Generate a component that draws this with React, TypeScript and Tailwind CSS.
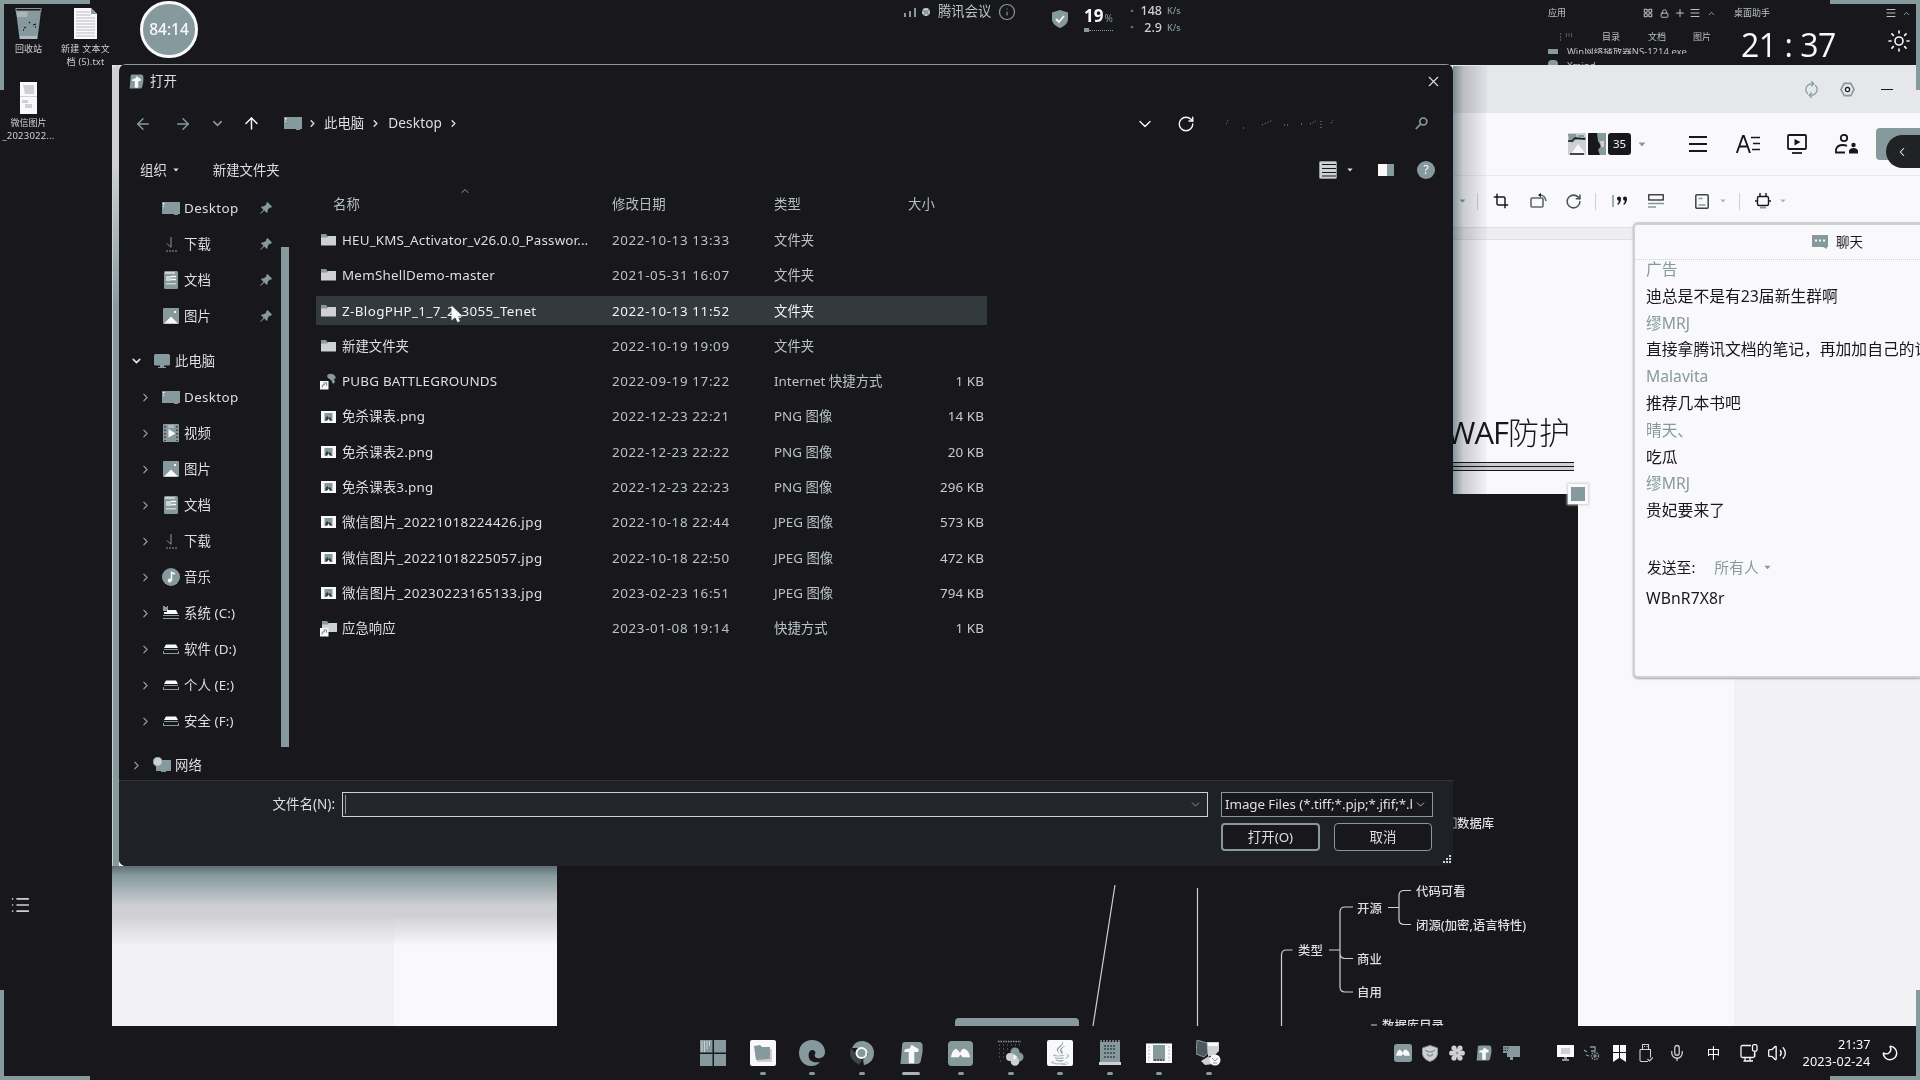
import React from "react";
import {
  ArrowLeft, ArrowRight, ArrowUp, ChevronDown, ChevronLeft, ChevronRight, ChevronUp, Crop, Info, Lock, Menu, Mic, Moon,
  Plus, RotateCw, Volume2, X, LayoutGrid, Sun, List, RefreshCw,
} from "lucide-react";
import { FaJava } from "react-icons/fa";

const TEAL = "#869a9e";
const GRAY = "#cfd0d4";
const WHITE = "#f9f9fc";
const INK = "#18171c";

type IconProps = { className?: string };

/* ---------- small shared drawings ---------- */

const Caret = ({ className = "" }: IconProps) => (
  <svg viewBox="0 0 8 5" className={`shrink-0 ${className}`}><path d="M0.5 0.5h7L4 4.6z" fill="currentColor" /></svg>
);

const Folder = () => (
  <svg viewBox="0 0 17 14" className="h-[14px] w-[17px]">
    <path d="M1 1h5l1.5 2H16v3H1z" fill={TEAL} />
    <path d="M1 4.5h6L8.500 3H16v9.500H1z" fill={GRAY} />
  </svg>
);

const LinkBadge = () => (
  <>
    <rect x="0" y="8" width="8.500" height="8.500" fill={WHITE} />
    <path d="M2 14.500c0-2 1-3.200 3-3.200M3.500 9.800h3v3" stroke={TEAL} strokeWidth="1.200" fill="none" />
  </>
);

const FolderLink = () => (
  <svg viewBox="0 0 17 17" className="h-[17px] w-[17px]">
    <path d="M2 1h5l1.500 2H17v3H2z" fill={TEAL} />
    <path d="M2 4.500h6L9 3h8v9H2z" fill={GRAY} />
    <LinkBadge />
  </svg>
);

const Pubg = () => (
  <svg viewBox="0 0 17 17" className="h-[17px] w-[17px]">
    <path d="M7 3c1-3 6-3 8 0l1 2-2 1 1 3-2 2-2-4-3-2z" fill={TEAL} />
    <LinkBadge />
  </svg>
);

const ImageFile = () => (
  <svg viewBox="0 0 15 12" className="h-[12px] w-[15px]">
    <rect width="15" height="12" fill={WHITE} />
    <rect x="3.500" y="2" width="8" height="8" fill={TEAL} />
    <path d="M4.500 9.500V7l2-2 1 2 1.500-1 2 3.500z" fill={INK} opacity=".75" />
    <path d="M6 10l1.500-2.500L9 10z" fill={WHITE} />
  </svg>
);

const DesktopIcon = () => (
  <svg viewBox="0 0 18 13" className="h-[13px] w-[18px]">
    <path d="M0 0h18v12h-2v1h-4v-1H0z" fill={TEAL} />
    <path d="M1 1h1.500v1.500H1zM1 4h1v1H1z" fill={WHITE} />
  </svg>
);

const DownloadIcon = () => (
  <svg viewBox="0 0 16 16" className="h-[16px] w-[16px]">
    <path d="M8 1v10M4 7.500l4 4" stroke={TEAL} strokeWidth="1" fill="none" />
    <path d="M3 15h11" stroke={TEAL} strokeWidth="1" strokeDasharray="2 1" />
  </svg>
);

const DocIcon = () => (
  <svg viewBox="0 0 14 18" className="h-[18px] w-[14px]">
    <rect width="14" height="18" rx="1.500" fill={TEAL} />
    <path d="M1 1h10v2H1zM2 5h5v5H2zM2 12h10v1.500H2z" fill={GRAY} />
    <path d="M7 5.500h5M7 8.500h5" stroke={WHITE} strokeWidth="1.600" />
  </svg>
);

const PictureIcon = () => (
  <svg viewBox="0 0 16 16" className="h-[16px] w-[16px]">
    <rect width="16" height="16" rx="1" fill={TEAL} />
    <path d="M1 15.500L8 8.500l7 7z" fill={WHITE} />
    <rect x="11" y="3" width="2" height="2" fill={WHITE} />
  </svg>
);

const VideoIcon = () => (
  <svg viewBox="0 0 16 18" className="h-[18px] w-[16px]">
    <rect width="16" height="18" rx="1" fill={TEAL} />
    <path d="M2 2v15M14 2v15" stroke={INK} strokeWidth="1.200" strokeDasharray="1.500 2" />
    <path d="M5 1h6v3H5z" fill={GRAY} opacity=".6" />
    <path d="M5.500 5l7 4.500-7 4z" fill={WHITE} />
  </svg>
);

const MusicIcon = () => (
  <svg viewBox="0 0 18 18" className="h-[18px] w-[18px]">
    <circle cx="9" cy="9" r="9" fill={TEAL} />
    <path d="M9.500 12.500V4.500l3.500 1.500" stroke={WHITE} strokeWidth="1.500" fill="none" />
    <circle cx="7.700" cy="12.500" r="2" fill={WHITE} />
  </svg>
);

const DriveIcon = () => (
  <svg viewBox="0 0 16 11" className="h-[11px] w-[16px]">
    <path d="M3 0.500h10l2 3.500H1z" fill={WHITE} />
    <path d="M1 5.500h14M0 9.500h16" stroke={TEAL} strokeWidth="1" />
    <path d="M0.500 7v2M15.500 7v2" stroke={TEAL} strokeWidth="1" />
  </svg>
);

const SystemDriveIcon = () => (
  <svg viewBox="0 0 16 14" className="h-[14px] w-[16px]">
    <path d="M0 0h2v1h2V0h1v5H0z" fill={TEAL} />
    <path d="M4 4h9l2 4H1V6h3z" fill={WHITE} />
    <path d="M0 9.500h16M0 12.500h16" stroke={TEAL} strokeWidth="1" />
  </svg>
);

const ComputerIcon = () => (
  <svg viewBox="0 0 16 15" className="h-[15px] w-[16px]">
    <rect width="16" height="11.500" rx="1.500" fill={TEAL} />
    <path d="M6 11h4v2H6zM4 13h8v1H4z" fill={TEAL} />
  </svg>
);

const NetworkIcon = () => (
  <svg viewBox="0 0 18 16" className="h-[16px] w-[18px]">
    <rect x="3" y="3" width="15" height="11" fill={TEAL} />
    <circle cx="4.700" cy="4.700" r="4.500" fill={GRAY} stroke={TEAL} />
    <path d="M8 14h5v1H8z" fill={TEAL} />
  </svg>
);

const Pin = () => (
  <svg viewBox="0 0 12 12" className="h-[12px] w-[12px]">
    <path d="M7.500 0L12 4.500 10.500 6 9.800 5.600 7.700 8l-.2 2.500-1 .3L4.300 8.500.5 12l-.4-.4L3.500 7.700 1.200 5.500l.4-1L4 4.300l2.400-2.100L6.100 1.400z" fill={TEAL} />
  </svg>
);

const CrossLogo = ({ className = "" }: IconProps) => (
  <svg viewBox="0 0 26 26" className={className}>
    <path d="M3 3q0-2 3-2h15q4 0 4 4v7l-2 10q-.5 3-3 3H1l1-10z" fill={TEAL} />
    <path d="M13 4l8 5-1 3h-4v12h-6V12H5l1-3 5-1z" fill={WHITE} />
  </svg>
);

const MeetingLogo = ({ className = "" }: IconProps) => (
  <svg viewBox="0 0 26 26" className={className}>
    <rect width="26" height="26" rx="4" fill={TEAL} />
    <path d="M3 17q1-7 5-9 3 1 4.500 4.500Q14 8 17 8q5 2 6 9h-8l-2-3-2 3z" fill={WHITE} />
  </svg>
);

/* ---------- desktop ---------- */

function Desktop() {
  return (
    <>
      <div className="absolute left-0 top-0 flex w-[114px] flex-col text-[9px] leading-[13px] text-[#cfd0d4]">
        <div className="flex pt-2">
          <div className="flex w-[57px] flex-col items-center">
            <svg viewBox="0 0 27 31" className="h-[31px] w-[27px]">
              <path d="M1 3h25l-3.500 28h-18z" fill={TEAL} />
              <path d="M1 3h12l-1 6H2z" fill={GRAY} opacity=".5" />
              <rect x="1" y="0.500" width="25" height="2.500" fill={INK} stroke={TEAL} />
              <path d="M5 28h17v3H5z" fill={GRAY} opacity=".6" />
              <path d="M9 20l2-1M8 22h1M18 17l3-1M20 19h1M14 15l1-1" stroke={INK} strokeWidth="1.300" />
            </svg>
            <span className="mt-[3px]">回收站</span>
          </div>
          <div className="flex w-[57px] flex-col items-center text-center">
            <svg viewBox="0 0 23 31" className="h-[31px] w-[23px]">
              <path d="M0 0h17l6 6v25H0z" fill={WHITE} />
              <path d="M2 4h14M2 7h15M2 10h19M2 13h19M2 16h19M2 19h19M2 22h19M2 25h19M2 28h19" stroke={GRAY} strokeWidth="1.400" />
              <path d="M17 0l6 6h-6z" fill={TEAL} />
            </svg>
            <span className="mt-[3px] whitespace-nowrap tracking-[0.250px]">新建 文本文<br />档 (5).txt</span>
          </div>
        </div>
        <div className="mt-[14px] flex w-[57px] flex-col items-center text-center">
          <svg viewBox="0 0 17 32" className="h-[32px] w-[17px]">
            <rect width="17" height="32" fill={WHITE} />
            <path d="M3 3h11v9H5zM0 14h17v1H0zM2 18h6v3H2zM5 22h7v4H5z" fill={GRAY} />
          </svg>
          <span className="mt-[2px] whitespace-nowrap leading-[13px]">微信图片<br /><span className="text-[9.500px] tracking-[0.200px]">_2023022...</span></span>
        </div>
      </div>

      <div className="absolute left-[140px] top-px flex h-[57px] w-[58px] items-center justify-center rounded-full border-[3px] border-[#f9f9fc] bg-[#869a9e] text-[15.500px] font-medium text-[#f9f9fc]">
        84:14
      </div>

      <List className="absolute left-[10px] top-[894px] h-[22px] w-[21px] text-[#cfd0d4]" strokeWidth={1.800} />

      {/* meeting status strip */}
      <div className="absolute left-[904px] top-[2px] flex h-[20px] items-center text-[13.330px] text-[#b9c3c6]">
        <svg viewBox="0 0 12 9" className="h-[9px] w-[12px]"><path d="M0 5h2v4H0zM5 3h2v6H5zM10 0h2v9h-2z" fill={TEAL} /></svg>
        <span className="ml-[6px] h-[8px] w-[8px] rounded-full border-[2px] border-dotted border-[#cfd0d4] bg-[#869a9e]" />
        <span className="ml-[8px]">腾讯会议</span>
        <Info className="ml-[7px] h-[18px] w-[18px] text-[#869a9e]" strokeWidth={1.600} />
      </div>

      <div className="absolute left-[1052px] top-0 flex h-[38px] items-center">
        <svg viewBox="0 0 16 18" className="h-[18px] w-[16px]">
          <path d="M8 0l8 2.500V9c0 4-3 7-8 9-5-2-8-5-8-9V2.500z" fill={TEAL} />
          <path d="M4 9l3 3 5-6" stroke={WHITE} strokeWidth="1.800" fill="none" />
        </svg>
        <div className="ml-[16px] w-[46px]">
          <div className="flex items-baseline leading-[20px] text-[#f9f9fc]">
            <span className="text-[17px] font-bold">19</span>
            <span className="ml-px text-[10px] text-[#869a9e]">%</span>
          </div>
          <div className="flex items-center">
            <span className="h-[4px] w-[5px] bg-[#869a9e]" />
            <span className="w-[24px] border-t border-dotted border-[#869a9e]" />
          </div>
        </div>
        <div className="flex flex-col text-[12.500px] font-medium leading-[17px] text-[#cfd0d4]">
          <div className="flex items-center">
            <Caret className="h-[3px] w-[4px] rotate-180 text-[#869a9e]" />
            <span className="w-[28px] text-right">148</span>
            <span className="ml-[5px] text-[9px] text-[#869a9e]">K/s</span>
          </div>
          <div className="flex items-center">
            <Caret className="h-[3px] w-[4px] text-[#869a9e]" />
            <span className="w-[28px] text-right">2.9</span>
            <span className="ml-[5px] text-[9px] text-[#869a9e]">K/s</span>
          </div>
        </div>
      </div>

      {/* file organiser widget */}
      <div className="absolute left-[1548px] top-0 h-[65px] w-[172px] overflow-hidden text-[9px] text-[#b9c3c6]">
        <div className="flex h-[26px] items-center">
          <span>应用</span>
          <LayoutGrid className="ml-[77px] h-[10px] w-[10px]" strokeWidth={2.500} />
          <Lock className="ml-[7px] h-[9px] w-[9px]" strokeWidth={2.500} />
          <Plus className="ml-[5px] h-[12px] w-[12px]" />
          <Menu className="ml-[3px] h-[12px] w-[12px]" />
          <ChevronUp className="ml-[6px] h-[9px] w-[9px]" />
        </div>
        <div className="flex h-[22px] items-center">
          <svg viewBox="0 0 14 8" className="ml-[12px] h-[8px] w-[14px]"><path d="M0 1h1M0 4h1M0 7h1M6 1h7M6 3h7" stroke={TEAL} strokeDasharray="1 1.500" /></svg>
          <span className="ml-[28px]">目录</span>
          <span className="ml-[28px]">文档</span>
          <span className="ml-[27px]">图片</span>
        </div>
        <div className="flex h-[6px] items-center overflow-hidden">
          <span className="h-[5px] w-[10px] bg-[#869a9e]" />
          <span className="ml-[9px] whitespace-nowrap text-[9.500px] leading-[13px]">Win网络播放器NS-1214.exe</span>
        </div>
        <div className="flex h-[11px] items-start overflow-hidden pt-[6px]">
          <span className="h-[6px] w-[10px] rounded-t bg-[#869a9e]" />
          <span className="ml-[9px] text-[9.500px] leading-[12px]">Xmind</span>
        </div>
      </div>

      {/* clock widget */}
      <div className="absolute left-[1734px] top-0 w-[182px] text-[9px] text-[#b9c3c6]">
        <div className="flex h-[26px] items-center">
          <span>桌面助手</span>
          <Menu className="ml-[115px] h-[12px] w-[12px]" />
          <ChevronUp className="ml-[5px] h-[9px] w-[9px]" />
        </div>
        <div className="flex h-[37px] items-center text-[#f9f9fc]">
          <span className="ml-[7px] w-[97px] whitespace-pre text-[32px] leading-[37px] tracking-[-0.500px] font-['Open_Sans','Noto_Sans',sans-serif]">21 : 37</span>
          <Sun className="mb-[8px] ml-[49px] h-[24px] w-[24px]" strokeWidth={1.600} />
        </div>
      </div>
    </>
  );
}

/* ---------- document editor window ---------- */

const Sep = ({ className = "" }: IconProps) => <span className={`h-[17px] w-px shrink-0 bg-[#cfd0d4] ${className}`} />;

function Editor() {
  return (
    <div className="absolute left-[112px] top-[65px] flex h-[961px] w-[1808px] flex-col bg-[#f9f9fc] text-[#18171c]">
      <div className="flex h-[48px] shrink-0 items-center justify-end bg-[#e6e7ea] pr-[27px] text-[#869a9e]">
        <RefreshCw className="h-[15px] w-[15px] -rotate-45" strokeWidth={2} />
        <svg viewBox="0 0 16 16" className="ml-[21px] h-[15px] w-[15px]" fill="none" stroke="currentColor" strokeWidth="1.700">
          <path d="M4.500 1.500h7L15 8l-3.500 6.500h-7L1 8z" /><circle cx="8" cy="8" r="2.300" stroke={INK} strokeWidth="1.300" />
        </svg>
        <span className="ml-[26px] h-px w-[12px] bg-[#18171c]" />
      </div>

      <div className="flex h-[62px] shrink-0 items-center justify-end">
        <svg viewBox="0 0 18 22" className="h-[22px] w-[18px]">
          <rect width="18" height="22" fill={GRAY} /><path d="M0 1h8l1 4 9-1v3H8L4 10l-3-3zM10 2h6v2h-6z" fill={TEAL} />
          <path d="M0 8h4l3-3 10 1M2 21h14" stroke={INK} strokeWidth="1.300" fill="none" />
          <path d="M4 20l6-9 7 9z" fill={WHITE} />
        </svg>
        <svg viewBox="0 0 18 22" className="ml-[2px] h-[22px] w-[18px]">
          <rect width="18" height="22" rx="1" fill={INK} /><path d="M9 0h9v22h-6l-2-5 3-4-3-5z" fill={TEAL} /><path d="M12 8h4v6h-3z" fill={GRAY} />
        </svg>
        <span className="ml-[2px] flex h-[22px] w-[23px] items-center justify-center rounded-[3px] bg-[#18171c] text-[11.500px] text-[#f9f9fc]">35</span>
        <Caret className="ml-[7px] h-[5px] w-[8px] text-[#869a9e]" />
        <svg viewBox="0 0 18 16" className="ml-[43px] h-[16px] w-[18px]"><path d="M0 1h18M0 8h18M0 15h18" stroke={INK} strokeWidth="1.800" /></svg>
        <svg viewBox="0 0 24 18" className="ml-[29px] h-[18px] w-[24px]" fill="none" stroke={INK} strokeWidth="1.900">
          <path d="M0.800 18L7 0.800h.8L14 18M3 11.500h9" /><path d="M15 2.500h9M17 8.500h7M16 14.500h8" strokeWidth="1.700" />
        </svg>
        <svg viewBox="0 0 20 20" className="ml-[27px] h-[20px] w-[20px]" fill="none" stroke={INK} strokeWidth="1.800">
          <rect x="1" y="1" width="18" height="14" rx="1" /><path d="M5 19h10" /><path d="M7.500 5l6 3-6 3.500z" fill={INK} stroke="none" />
        </svg>
        <svg viewBox="0 0 24 20" className="ml-[28px] h-[20px] w-[24px]" fill="none" stroke={INK} strokeWidth="1.800">
          <circle cx="9" cy="4" r="3.200" /><path d="M10 18.500H1v-3q1-4.500 7-4.500 2 0 4 .8" /><circle cx="18.500" cy="11" r="2.200" fill={INK} stroke="none" />
          <path d="M14 19.500v-3q1-2.500 4.500-2.500t4.500 2.500v3z" fill={INK} stroke="none" />
        </svg>
        <div className="relative ml-[17px] h-[32px] w-[44px] rounded-l-[4px] bg-[#869a9e]">
          <div className="absolute right-0 top-[7px] flex h-[33px] w-[34px] items-center rounded-l-full bg-[#202226] pl-[9px] text-[#f9f9fc]">
            <ChevronLeft className="h-[14px] w-[14px]" strokeWidth={1.800} />
          </div>
        </div>
      </div>

      <div className="flex h-[52px] shrink-0 items-center border-t border-[#ebebee] pb-px pl-[1347px]">
        <Caret className="h-[4px] w-[7px] text-[#869a9e]" />
        <Sep className="ml-[11px]" />
        <Crop className="ml-[15px] h-[16px] w-[16px]" strokeWidth={2.200} />
        <svg viewBox="0 0 17 16" className="ml-[21px] h-[16px] w-[17px]" fill="none" stroke="#5c6a6e" strokeWidth="1.600">
          <rect x="1" y="5" width="12" height="9" rx="1" /><path d="M9 2q6-.5 7 6" /><path d="M11 0L8 2l3 2.200z" fill={INK} stroke="none" />
        </svg>
        <RotateCw className="ml-[18px] h-[17px] w-[17px] text-[#4a5659]" strokeWidth={2.200} />
        <Sep className="ml-[13px]" />
        <svg viewBox="0 0 16 12" className="ml-[16px] h-[12px] w-[16px]">
          <path d="M1 0v12" stroke={TEAL} strokeWidth="1.600" />
          <path d="M5 3.500a2 2 0 114 0q0 4-3 6.500l-.7-1q1.500-1.500 1.500-3.200Q5 5.500 5 3.500zM11 3.500a2 2 0 114 0q0 4-3 6.500l-.7-1q1.500-1.500 1.500-3.200Q11 5.500 11 3.500z" fill={INK} />
        </svg>
        <svg viewBox="0 0 16 14" className="ml-[20px] h-[14px] w-[16px]" fill="none" stroke={TEAL} strokeWidth="1.600">
          <rect x="0.800" y="0.800" width="14.400" height="5.200" stroke={INK} strokeWidth="1.200" /><path d="M0 9.500h16M0 13h8" />
        </svg>
        <svg viewBox="0 0 14 15" className="ml-[31px] h-[15px] w-[14px]" fill="none" stroke={TEAL} strokeWidth="1.500">
          <rect x="0.800" y="0.800" width="12.400" height="13.400" rx="1" stroke="#3b4347" /><path d="M3.500 4.500h4M3.500 11h7" />
        </svg>
        <Caret className="ml-[11px] h-[4px] w-[6px] text-[#a9b4b8]" />
        <Sep className="ml-[13px]" />
        <svg viewBox="0 0 16 16" className="ml-[15px] h-[16px] w-[16px]" fill="none" stroke={INK} strokeWidth="1.400">
          <rect x="2.500" y="3.500" width="11" height="9" rx="1.500" /><path d="M5 0v3.500M11 0v3.500M0 8h2M14 8h2" /><path d="M5 14.500h6" stroke={TEAL} strokeWidth="2" />
        </svg>
        <Caret className="ml-[9px] h-[4px] w-[6px] text-[#a9b4b8]" />
      </div>

      <div className="h-[13px] shrink-0 border-y border-[#dfe0e3] bg-[#eeeef1]" />

      <div className="flex min-h-0 flex-1">
        <div className="w-[282px] shrink-0 bg-[#f2f2f5]" />
        <div className="flex w-[1340px] shrink-0 flex-col">
          <div className="flex h-[254px] flex-col items-end pr-[160px]">
            <div className="mr-[4px] mt-[167px] whitespace-nowrap text-[31px] font-light leading-[50px] text-[#18171c]">
              <span className="font-normal tracking-[-1px] font-['Open_Sans','Noto_Sans',sans-serif]">WAF</span>防护
            </div>
            <div className="mt-[5px] flex h-[9px] w-[400px] flex-col justify-between bg-[#cfd0d4]">
              <span className="h-px bg-[#18171c]" /><span className="h-px bg-[#18171c]" /><span className="h-px bg-[#18171c]" />
            </div>
          </div>
          <MindMap />
        </div>
        <div className="flex-1 bg-[#f2f2f5]" />
      </div>
    </div>
  );
}

const Node = ({ className, children }: { className: string; children: React.ReactNode }) => (
  <span className={`absolute whitespace-nowrap text-[12.400px] font-medium leading-[16px] text-[#dddfe2] ${className}`}>{children}</span>
);

/* Canvas origin sits at (557, 494) of the desktop. */
function MindMap() {
  return (
    <div className="relative ml-[163px] h-[532px] w-[1021px] bg-[#18171c]">
      <svg viewBox="0 0 1021 532" className="absolute inset-0 h-full w-full overflow-hidden" fill="none" stroke={GRAY} strokeWidth="1.200">
        <path d="M558 391L536 532M640.500 394V532" />
        <path d="M724.500 532V461q0-5 5-5h6M772 456h11M796 413h-8q-5 0-5 5v75q0 5 5 5h8M783 459q0 5.500 5 5.500h8M831 413.500h11M854 396.500h-7q-5 0-5 5v24q0 5 5 5h7M814 531h6" />
        <path d="M896 324h3v10h-3" stroke={TEAL} />
        <path d="M398 532v-4q0-4 4-4h116q4 0 4 4v4z" fill={TEAL} stroke="none" />
      </svg>
      <Node className="left-[900px] top-[322px]">数据库</Node>
      <Node className="left-[859px] top-[390px] text-[#b3bfc2]">代码可看</Node>
      <Node className="left-[800px] top-[407px]">开源</Node>
      <Node className="left-[859px] top-[424px]">闭源(加密,语言特性)</Node>
      <Node className="left-[741px] top-[449px]">类型</Node>
      <Node className="left-[800px] top-[458px]">商业</Node>
      <Node className="left-[800px] top-[491px]">自用</Node>
      <div className="absolute left-[825px] top-[524px] h-[8px] w-[70px] overflow-hidden">
        <Node className="left-0 top-0">数据库目录</Node>
      </div>
      <div className="absolute right-[-10px] top-[-10px] h-[20px] w-[20px] border-[3px] border-[#f9f9fc] bg-[#869a9e] shadow-[0_0_2px_1px_#cfd0d4]" />
    </div>
  );
}

/* ---------- chat panel ---------- */

const MESSAGES = [
  { from: "广告", text: "迪总是不是有23届新生群啊" },
  { from: "缪MRJ", text: "直接拿腾讯文档的笔记，再加加自己的记" },
  { from: "Malavita", text: "推荐几本书吧" },
  { from: "晴天、", text: "吃瓜" },
  { from: "缪MRJ", text: "贵妃要来了" },
];

function Chat() {
  return (
    <div className="absolute left-[1633px] top-[222px] flex h-[456px] w-[287px] flex-col overflow-hidden rounded-l-[5px] border-b-2 border-l-2 border-t-[3px] border-[#cfd0d4] bg-[#f9f9fc] text-[#18171c] shadow-[0_1px_2px_#9aa6aa]">
      <div className="flex h-[35px] shrink-0 items-center border-b border-dotted border-[#cfd0d4] pl-[177px]">
        <svg viewBox="0 0 16 14" className="h-[14px] w-[16px]"><path d="M0 0h16v12h-1v2l-4-2H0z" fill={TEAL} /><path d="M3 5.500h10" stroke={WHITE} strokeWidth="2" strokeDasharray="2 2" /></svg>
        <span className="ml-[8px] text-[13.500px]">聊天</span>
      </div>
      <div className="flex h-[289px] shrink-0 flex-col whitespace-nowrap pl-[11px] text-[15.700px] leading-[26.800px]">
        {MESSAGES.map((m, i) => (
          <React.Fragment key={i}>
            <span className={i === 0 ? "mt-[-4px] text-[#869a9e]" : "text-[#869a9e]"}>{m.from}</span>
            <span className="text-[15.800px]">{m.text}</span>
          </React.Fragment>
        ))}
      </div>
      <div className="flex items-center pl-[12px] pt-[5px] text-[14.800px] leading-[26px]">
        <span>发送至:</span>
        <span className="ml-[19px] text-[#869a9e]">所有人</span>
        <Caret className="ml-[5px] h-[5px] w-[7px] text-[#869a9e]" />
      </div>
      <div className="pl-[11px] pt-[5px] text-[15.700px] leading-[26px] tracking-[0.100px]">WBnR7X8r</div>
    </div>
  );
}

/* ---------- file dialog ---------- */

type TreeItem = { icon: React.ReactNode; label: string };

const PINNED: TreeItem[] = [
  { icon: <DesktopIcon />, label: "Desktop" },
  { icon: <DownloadIcon />, label: "下载" },
  { icon: <DocIcon />, label: "文档" },
  { icon: <PictureIcon />, label: "图片" },
];

const COMPUTER: TreeItem[] = [
  { icon: <DesktopIcon />, label: "Desktop" },
  { icon: <VideoIcon />, label: "视频" },
  { icon: <PictureIcon />, label: "图片" },
  { icon: <DocIcon />, label: "文档" },
  { icon: <DownloadIcon />, label: "下载" },
  { icon: <MusicIcon />, label: "音乐" },
  { icon: <SystemDriveIcon />, label: "系统 (C:)" },
  { icon: <DriveIcon />, label: "软件 (D:)" },
  { icon: <DriveIcon />, label: "个人 (E:)" },
  { icon: <DriveIcon />, label: "安全 (F:)" },
];

const FILES = [
  { icon: <Folder />, name: "HEU_KMS_Activator_v26.0.0_Passwor...", date: "2022-10-13 13:33", type: "文件夹", size: "", fit: "tracking-[0.160px]" },
  { icon: <Folder />, name: "MemShellDemo-master", date: "2021-05-31 16:07", type: "文件夹", size: "", fit: "tracking-[0.220px]" },
  { icon: <Folder />, name: "Z-BlogPHP_1_7_2_3055_Tenet", date: "2022-10-13 11:52", type: "文件夹", size: "", hover: true, fit: "tracking-[0.380px]" },
  { icon: <Folder />, name: "新建文件夹", date: "2022-10-19 19:09", type: "文件夹", size: "", fit: "" },
  { icon: <Pubg />, name: "PUBG BATTLEGROUNDS", date: "2022-09-19 17:22", type: "Internet 快捷方式", size: "1 KB", fit: "tracking-[0.220px]" },
  { icon: <ImageFile />, name: "免杀课表.png", date: "2022-12-23 22:21", type: "PNG 图像", size: "14 KB", fit: "tracking-[0.150px]" },
  { icon: <ImageFile />, name: "免杀课表2.png", date: "2022-12-23 22:22", type: "PNG 图像", size: "20 KB", fit: "tracking-[0.200px]" },
  { icon: <ImageFile />, name: "免杀课表3.png", date: "2022-12-23 22:23", type: "PNG 图像", size: "296 KB", fit: "tracking-[0.200px]" },
  { icon: <ImageFile />, name: "微信图片_20221018224426.jpg", date: "2022-10-18 22:44", type: "JPEG 图像", size: "573 KB", fit: "tracking-[0.450px]" },
  { icon: <ImageFile />, name: "微信图片_20221018225057.jpg", date: "2022-10-18 22:50", type: "JPEG 图像", size: "472 KB", fit: "tracking-[0.450px]" },
  { icon: <ImageFile />, name: "微信图片_20230223165133.jpg", date: "2023-02-23 16:51", type: "JPEG 图像", size: "794 KB", fit: "tracking-[0.450px]" },
  { icon: <FolderLink />, name: "应急响应", date: "2023-01-08 19:14", type: "快捷方式", size: "1 KB", fit: "" },
];

function Tree() {
  return (
    <div className="flex w-[162px] shrink-0 flex-col">
      {PINNED.map((it) => (
        <div key={it.label} className="flex h-[36px] shrink-0 items-center pl-[43px]">
          <span className="flex w-[18px] justify-center">{it.icon}</span>
          <span className={it.label === "Desktop" ? "ml-[4px] flex-1 tracking-[0.350px]" : "ml-[4px] flex-1"}>{it.label}</span>
          <span className="mr-[9px]"><Pin /></span>
        </div>
      ))}
      <div className="mt-[9px] flex h-[36px] shrink-0 items-center pl-[11px]">
        <ChevronDown className="h-[14px] w-[13px]" strokeWidth={3} />
        <span className="ml-[11px]"><ComputerIcon /></span>
        <span className="ml-[5px]">此电脑</span>
      </div>
      {COMPUTER.map((it) => (
        <div key={it.label} className="flex h-[36px] shrink-0 items-center pl-[20px]">
          <ChevronRight className="h-[13px] w-[13px] text-[#869a9e]" strokeWidth={2.200} />
          <span className="ml-[10px] flex w-[18px] justify-center">{it.icon}</span>
          <span className={it.label === "Desktop" ? "ml-[4px] tracking-[0.350px]" : "ml-[4px] tracking-[0.100px]"}>{it.label}</span>
        </div>
      ))}
      <div className="mt-[8px] flex h-[36px] shrink-0 items-center pl-[11px]">
        <ChevronRight className="h-[13px] w-[13px] text-[#869a9e]" strokeWidth={2.200} />
        <span className="ml-[10px]"><NetworkIcon /></span>
        <span className="ml-[4px]">网络</span>
      </div>
    </div>
  );
}

function FileList() {
  return (
    <div className="ml-[27px] flex w-[671px] flex-col">
      <div className="relative flex h-[32.600px] items-center pb-[5px] text-[#b3bfc2]">
        <ChevronUp className="absolute left-[142px] top-[-5px] h-[12px] w-[14px] text-[#a9b4b8]" strokeWidth={1.700} />
        <span className="w-[278px] pl-[17px]">名称</span>
        <span className="w-[162px] pl-[18px]">修改日期</span>
        <span className="w-[134px] pl-[18px]">类型</span>
        <span className="pl-[18px]">大小</span>
      </div>
      {FILES.map((f) => (
        <div key={f.name} className="flex h-[35.270px] shrink-0 items-center">
          <div className={f.hover ? "flex h-[29px] w-full items-center bg-[#323a3e] text-[#f0f1f3]" : "flex h-[29px] w-full items-center"}>
            <span className="flex w-[26px] justify-center pr-[2px]">{f.icon}</span>
            <span className={`w-[270px] whitespace-nowrap ${f.fit}`}>{f.name}</span>
            <span className={f.hover ? "w-[162px] tracking-[0.630px]" : "w-[162px] tracking-[0.630px] text-[#b9c3c6]"}>{f.date}</span>
            <span className={f.hover ? "w-[134px]" : "w-[134px] whitespace-nowrap text-[#b9c3c6]"}>{f.type}</span>
            <span className="flex-1 pr-[3px] text-right tracking-[0.100px] text-[#c5ccd0]">{f.size}</span>
          </div>
        </div>
      ))}
    </div>
  );
}

function OpenDialog() {
  return (
    <>
      {/* drop shadow along the left, right and bottom edges */}
      <div className="absolute left-[112px] top-[65px] h-[812px] w-[7px] rounded-tl-[6px] border-l border-[#cfd0d4] bg-linear-to-b from-[#cfd0d4] from-12% to-[#869a9e] to-30%" />
      <div className="absolute left-[112px] top-[866px] h-[80px] w-[445px] bg-linear-to-b from-[#5f6f73] via-[#869a9e] via-12% to-[#cfd0d4] to-50% mask-[linear-gradient(to_bottom,black_62%,transparent)]" />
      <div className="absolute left-[1453px] top-[66px] h-[428px] w-[34px] bg-linear-to-r from-[#869a9e] via-[#cfd0d4] via-30% to-[#f9f9fc] mix-blend-multiply" />

      <div className="absolute left-[119px] top-[64px] flex h-[802px] w-[1334px] flex-col overflow-hidden rounded-[7px] bg-[#18171c] text-[13.400px] text-[#dddfe2]">
        <div className="flex h-[33px] shrink-0 items-center border-t border-[#869a9e] pl-[10px] pr-[11px]">
          <CrossLogo className="h-[15px] w-[15px]" />
          <span className="ml-[6px] flex-1">打开</span>
          <X className="h-[17px] w-[17px]" strokeWidth={1.600} />
        </div>

        <div className="flex h-[53px] shrink-0 items-center pl-[15px]">
          <ArrowLeft className="h-[18px] w-[18px] text-[#869a9e]" strokeWidth={1.900} />
          <ArrowRight className="ml-[22px] h-[18px] w-[18px] text-[#869a9e]" strokeWidth={1.900} />
          <ChevronDown className="ml-[18px] h-[15px] w-[15px] text-[#869a9e]" strokeWidth={2.500} />
          <ArrowUp className="ml-[17px] h-[19px] w-[19px] text-[#f9f9fc]" strokeWidth={1.800} />
          <span className="ml-[23px]"><DesktopIcon /></span>
          <ChevronRight className="ml-[5px] h-[11px] w-[11px]" strokeWidth={3} />
          <span className="ml-[6px]">此电脑</span>
          <ChevronRight className="ml-[6px] h-[11px] w-[11px]" strokeWidth={3} />
          <span className="ml-[7px] text-[13.600px] tracking-[0.150px]">Desktop</span>
          <ChevronRight className="ml-[6px] h-[11px] w-[11px]" strokeWidth={3} />
          <span className="flex-1" />
          <ChevronDown className="h-[20px] w-[20px] text-[#f9f9fc]" strokeWidth={1.600} />
          <RotateCw className="ml-[22px] h-[18px] w-[18px] text-[#f9f9fc]" strokeWidth={1.800} />
          <svg viewBox="0 0 110 12" className="ml-[31px] h-[12px] w-[110px]" stroke={TEAL} strokeWidth="1">
            <path d="M0 6l2-4M17 10h1M36 7l4-2 7-3M58 7h5M75 6h3M84 6l6-3M95 3v8M105 5l3-4" strokeDasharray="1 2" fill="none" />
          </svg>
          <svg viewBox="0 0 13 13" className="ml-[79px] mr-[25px] h-[13px] w-[13px]" fill="none" stroke={TEAL} strokeWidth="1.700">
            <circle cx="8.300" cy="4.500" r="3.500" /><path d="M5.600 7.200L0.800 12" />
          </svg>
        </div>

        <div className="flex h-[40px] shrink-0 items-center pl-[21px] pr-[18px]">
          <span>组织</span>
          <Caret className="ml-[6px] h-[4px] w-[6px]" />
          <span className="ml-[34px] flex-1">新建文件夹</span>
          <svg viewBox="0 0 18 18" className="h-[18px] w-[18px]">
            <rect x="0.500" y="0.500" width="17" height="17" rx="1" fill={GRAY} stroke={TEAL} />
            <path d="M3 3.500h14M3 7.500h14M3 11.500h14M3 15h14" stroke={INK} strokeWidth="1" />
          </svg>
          <Caret className="ml-[10px] h-[4px] w-[6px]" />
          <svg viewBox="0 0 16 12" className="ml-[25px] h-[12px] w-[16px]">
            <rect width="16" height="12" fill={TEAL} /><rect width="9" height="12" fill={WHITE} />
          </svg>
          <span className="ml-[23px] flex h-[18px] w-[18px] items-center justify-center rounded-full bg-[#869a9e] text-[12px] text-[#f9f9fc]">?</span>
        </div>

        <div className="flex h-[590px] shrink-0">
          <Tree />
          <div className="mt-[57px] h-[500px] w-[8px] shrink-0 bg-[#869a9e]" />
          <FileList />
        </div>

        <div className="flex flex-1 flex-col border-t border-dotted border-[#3c464a] bg-[#1f2126] pt-[11px]">
          <div className="flex h-[25px] items-center">
            <span className="w-[216px] text-right text-[13.500px]">文件名(N):</span>
            <div className="ml-[7px] flex h-[25px] w-[866px] items-center justify-between border border-[#cfd0d4] bg-[#23272b] pl-[2px] pr-[5px]">
              <span className="h-[19px] w-px bg-[#869a9e]" />
              <ChevronDown className="h-[13px] w-[13px] text-[#869a9e]" strokeWidth={1.800} />
            </div>
            <div className="ml-[13px] flex h-[25px] w-[212px] items-center border border-[#869a9e] bg-[#18171c] pl-[3px] pr-[3px]">
              <span className="w-[187px] overflow-hidden whitespace-nowrap tracking-[-0.080px]">Image Files (*.tiff;*.pjp;*.jfif;*.bmp</span>
              <ChevronDown className="ml-[2px] h-[13px] w-[13px] shrink-0 text-[#a9b4b8]" strokeWidth={1.800} />
            </div>
          </div>
          <div className="mt-[6px] flex justify-end pr-[21px]">
            <span className="flex h-[28px] w-[99px] items-center justify-center rounded-[4px] border-2 border-[#869a9e] bg-[#18171c]">打开(O)</span>
            <span className="ml-[14px] flex h-[28px] w-[98px] items-center justify-center rounded-[4px] border border-[#869a9e] bg-[#18171c]">取消</span>
          </div>
          <div className="flex justify-end pr-[2px] pt-[4px]">
            <svg viewBox="0 0 8 8" className="h-[8px] w-[8px]"><path d="M6 0h2v2H6zM3 3h2v2H3zM6 3h2v2H6zM0 6h2v2H0zM3 6h2v2H3zM6 6h2v2H6z" fill={GRAY} /></svg>
          </div>
        </div>
      </div>

      <svg viewBox="0 0 12 18" className="absolute left-[451px] top-[305px] h-[18px] w-[12px]">
        <path d="M0.500 0.500v15l3.700-3.200 2.300 5 2.500-1.100-2.200-4.800h5z" fill={WHITE} />
      </svg>
    </>
  );
}

/* ---------- taskbar ---------- */

const APPS: { icon: React.ReactNode; state?: "open" | "active" }[] = [
  { icon: <svg viewBox="0 0 26 26" className="h-[26px] w-[26px]"><path d="M0 0h12.500v12.500H0zM14 0h12v12.500H14zM0 14h12.500v12H0zM14 14h12v12H14z" fill={TEAL} /><path d="M2 1v11M4.500 1v11M7 1v8M9.500 1v5" stroke={GRAY} strokeWidth="1" /></svg> },
  { icon: <svg viewBox="0 0 26 26" className="h-[26px] w-[26px]"><rect width="26" height="26" rx="2" fill={WHITE} /><path d="M7 9h15v13H7z" fill={GRAY} /><path d="M4 6l6-1 2 2h8v12l-14 1z" fill={TEAL} /></svg>, state: "open" },
  { icon: <svg viewBox="0 0 26 26" className="h-[26px] w-[26px]"><path d="M13 0c8 0 13 6 13 12 0 5-4 7-8 6-2-.5-3-2-2-4 1-1.500 0-4-3-4-3 .5-4 4-3 8 1 3 4 5 11 4-3 3-5 4-9 4C4 26 0 19 0 13 0 5 6 0 13 0z" fill={TEAL} /></svg>, state: "open" },
  { icon: <svg viewBox="0 0 26 26" className="h-[26px] w-[26px]"><path d="M13 1a12 12 0 0112 12c0 6-4 11-10 12l-1-5 5-6-3-6H3q3-7 10-7z" fill={TEAL} /><path d="M2 8q-3 9 4 14l4 3 3-5-5-5z" fill={TEAL} opacity=".35" /><circle cx="12.500" cy="13" r="5" fill={TEAL} stroke={WHITE} strokeWidth="2" /></svg>, state: "open" },
  { icon: <CrossLogo className="h-[24px] w-[25px]" />, state: "active" },
  { icon: <MeetingLogo className="h-[25px] w-[25px]" />, state: "open" },
  { icon: <svg viewBox="0 0 26 26" className="h-[26px] w-[26px]"><path d="M0 1.500h23" stroke={TEAL} strokeWidth="1.500" strokeDasharray="1.500 1" /><path d="M1 5h22M1 9h10M1 13h7M1 17h5M2 21h4" stroke={TEAL} strokeDasharray="1 3" opacity=".8" /><circle cx="17" cy="12" r="4.500" fill={TEAL} /><circle cx="21" cy="17" r="4.500" fill={TEAL} /><circle cx="12" cy="17" r="4" fill={GRAY} /><circle cx="17" cy="21.500" r="4.300" fill={GRAY} /><path d="M15.500 14l4 3-4 3z" fill={WHITE} /></svg>, state: "open" },
  { icon: <span className="flex h-[26px] w-[26px] items-center justify-center rounded-[2px] bg-[#f9f9fc] text-[#869a9e]"><FaJava className="h-[24px] w-[24px]" /></span>, state: "open" },
  { icon: <svg viewBox="0 0 22 26" className="h-[26px] w-[22px]"><path d="M1 2h20v20H1z" fill={TEAL} /><path d="M0 22h22v3H0z" fill={GRAY} /><path d="M1 1h20" stroke={GRAY} strokeDasharray="2 1" /><path d="M5 6h12M5 9h12M5 13h12M5 17h12" stroke={INK} strokeDasharray="2 1" /></svg>, state: "open" },
  { icon: <svg viewBox="0 0 26 20" className="h-[20px] w-[26px]"><rect width="26" height="20" fill={WHITE} /><path d="M0 0.500h26" stroke={TEAL} /><rect x="7" y="2" width="12" height="16" fill={TEAL} /><path d="M3 3v15M23 3v15" stroke={GRAY} strokeWidth="1.500" strokeDasharray="2 1.500" /><path d="M8 17h10" stroke={INK} strokeDasharray="2 1" /></svg>, state: "open" },
  { icon: <svg viewBox="0 0 26 26" className="h-[26px] w-[26px]"><path d="M1 0l10 3 1 10-4 4-8-3z" fill="#4c585c" stroke={TEAL} /><path d="M11 2h12v9l-5 5h-6z" fill={GRAY} /><path d="M12 3h10v3H12z" fill={WHITE} /><path d="M5 21l8-5 4 8-8 1z" fill={GRAY} /><circle cx="19" cy="20" r="5.500" fill={WHITE} /><path d="M16 18l3 3 3-3M17 23h4" stroke={TEAL} fill="none" /></svg>, state: "open" },
];

function Taskbar() {
  return (
    <div className="absolute left-0 top-[1026px] flex h-[54px] w-full items-center bg-[#18171c] text-[#f9f9fc]">
      <div className="ml-[688.500px] grid w-[545px] grid-cols-11">
        {APPS.map((a, i) => (
          <div key={i} className="flex h-[54px] flex-col items-center pt-[13px]">
            <div className="flex h-[28px] items-center">{a.icon}</div>
            {a.state === "open" && <span className="mt-[5px] h-[3px] w-[6px] rounded-full bg-[#869a9e]" />}
            {a.state === "active" && <span className="mt-[5px] h-[3px] w-[18px] rounded-full bg-[#a9b4b8]" />}
          </div>
        ))}
      </div>

      <div className="ml-[156px] grid h-full grid-cols-[27px_27px_27px_27px_27px_27px_27px_27px_27px_27px_35px_38px_33px_22px_83px_38px] items-center justify-items-center">
        <MeetingLogo className="h-[18px] w-[18px]" />
        <svg viewBox="0 0 16 17" className="h-[17px] w-[16px]"><path d="M8 .5l7.500 2.500v5c0 4-3 7-7.500 8.500C3.500 15 .5 12 .5 8V3z" fill={GRAY} stroke={TEAL} /><path d="M3 5q5 4 10 0M5 9q3 4 6 0" stroke={TEAL} strokeWidth="1.600" fill="none" /></svg>
        <svg viewBox="0 0 16 16" className="h-[16px] w-[16px]" fill={GRAY}><circle cx="5" cy="3" r="2.600" /><circle cx="11" cy="3" r="2.600" /><circle cx="2.700" cy="8" r="2.600" /><circle cx="13.300" cy="8" r="2.600" /><circle cx="5" cy="13" r="2.600" /><circle cx="11" cy="13" r="2.600" /><circle cx="8" cy="8" r="4.500" /><circle cx="8" cy="8" r="1.300" fill={TEAL} /></svg>
        <CrossLogo className="h-[16px] w-[16px]" />
        <svg viewBox="0 0 18 14" className="h-[14px] w-[18px]"><path d="M1 0h17v11h-7v3H8v-3H5V7H1z" fill={TEAL} /><path d="M0 2h7M0 4.500h6" stroke={INK} strokeDasharray="1.500 1" /></svg>
        <span />
        <svg viewBox="0 0 17 16" className="h-[16px] w-[17px]"><rect width="17" height="12" fill={WHITE} /><path d="M4 3h9v6H4z" fill={GRAY} /><path d="M7 12h3v2h2v2H5v-2h2z" fill={TEAL} /></svg>
        <svg viewBox="0 0 16 14" className="h-[14px] w-[16px]" fill="none" stroke={TEAL} strokeWidth="1.300"><path d="M0 4l3 2M2 9l3 1M6 1h5v4H7" /><circle cx="11" cy="10" r="3.500" strokeDasharray="1.500 1" /><circle cx="11" cy="10" r="1" /></svg>
        <svg viewBox="0 0 13 17" className="h-[17px] w-[13px]"><path d="M0 0h6v7H0zM7 0h6v7H7zM0 8h6v5l-6 4zM7 8h6v9l-6-4z" fill={WHITE} /></svg>
        <svg viewBox="0 0 14 18" className="h-[18px] w-[14px]" fill="none" stroke={GRAY} strokeWidth="1.100"><path d="M3.500.5h6v5h-6zM1 5.500h10.500v8M1 5.500V16q0 1.500 1.500 1.500H9M8.500 15l2 2 3.500-3.500M5 2.500h1M7.500 2.500h1" /></svg>
        <Mic className="h-[18px] w-[18px] text-[#cfd0d4]" strokeWidth={1.700} />
        <span className="text-[13.500px]">中</span>
        <svg viewBox="0 0 18 18" className="h-[18px] w-[18px]" fill="none" stroke={WHITE} strokeWidth="1.300"><path d="M11 1.500H2.500q-1.500 0-1.500 1.500v9q0 1.500 1.500 1.500H13q1.500 0 1.500-1.500V9M5 13.500v3M10 13.500v3M3.500 17H13" /><rect x="12.500" y="0.700" width="4.500" height="6.500" rx="1.500" /><path d="M14.700 7v6" /></svg>
        <Volume2 className="h-[20px] w-[20px]" strokeWidth={1.600} />
        <div className="justify-self-end whitespace-nowrap text-right text-[12.700px] leading-[17.500px]">
          <div>21:37</div>
          <div className="tracking-[0.180px]">2023-02-24</div>
        </div>
        <Moon className="h-[18px] w-[18px] -scale-x-100" strokeWidth={1.900} />
      </div>
    </div>
  );
}

export default function App() {
  return (
    <div className="relative h-[1080px] w-[1920px] overflow-hidden bg-[#18171c] font-['Noto_Sans','Noto_Sans_CJK_SC',sans-serif]">
      <Desktop />
      <Editor />
      <OpenDialog />
      <Chat />
      <Taskbar />
      {/* screen-share corner brackets */}
      <div className="absolute left-0 top-0 h-[90px] w-[90px] border-l-4 border-t-4 border-[#869a9e]" />
      <div className="absolute right-0 top-0 h-[90px] w-[90px] border-r-4 border-t-4 border-[#869a9e]" />
      <div className="absolute bottom-0 left-0 h-[90px] w-[90px] border-b-4 border-l-4 border-[#869a9e]" />
      <div className="absolute bottom-0 right-0 h-[90px] w-[90px] border-b-4 border-r-4 border-[#869a9e]" />
    </div>
  );
}
